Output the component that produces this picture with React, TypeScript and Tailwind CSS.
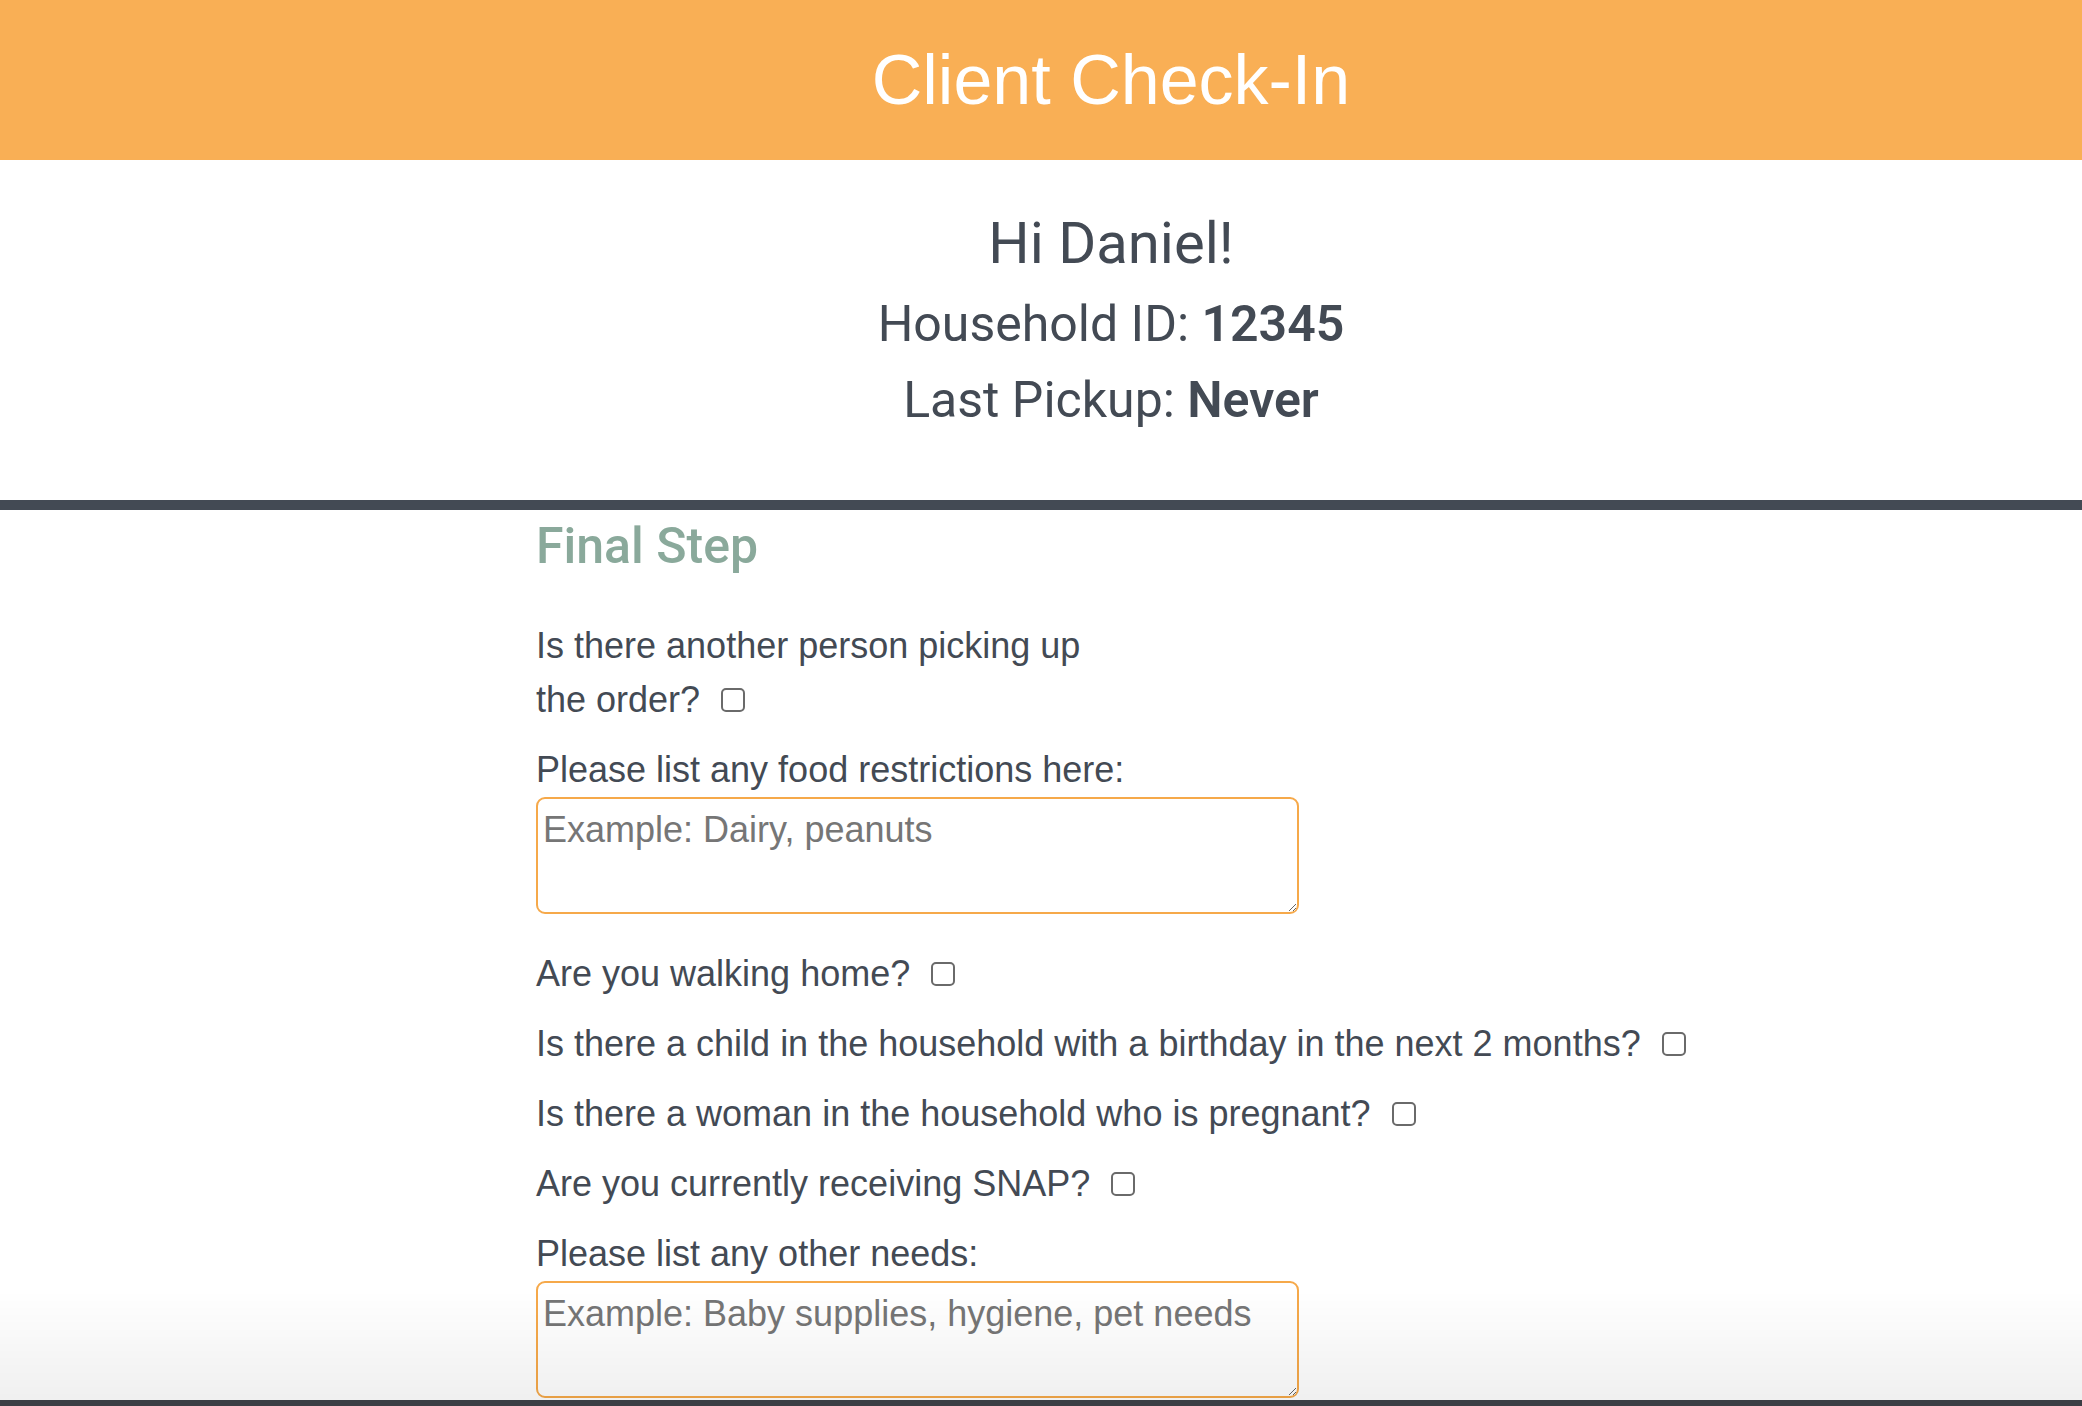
import type { ReactNode } from 'react'

const QUESTIONS = [
  'Are you walking home?',
  'Is there a child in the household with a birthday in the next 2 months?',
  'Is there a woman in the household who is pregnant?',
  'Are you currently receiving SNAP?',
]

function Box() {
  return (
    <input
      type="checkbox"
      className="appearance-none inline-block ml-[21px] w-[24px] h-[24px] border-2 border-[#6a6a6a] rounded-[5px] bg-white align-baseline"
    />
  )
}

function Question({ children, className = '' }: { children: ReactNode; className?: string }) {
  return (
    <label className={`block text-[36px] leading-[54px] ${className}`}>
      {children}
      <Box />
    </label>
  )
}

function Notes({ placeholder }: { placeholder: string }) {
  return (
    <textarea
      placeholder={placeholder}
      className="block w-[763px] h-[117px] border-2 border-[#f6a94a] rounded-[9px] px-[5px] py-[4px] text-[36px] leading-[54px] text-[#434a54] placeholder:text-[#767676] outline-none bg-transparent"
    />
  )
}

export default function App() {
  return (
    <div className="min-h-screen bg-white text-[#434a54]" style={{ fontFamily: '"Liberation Sans", Arial, sans-serif' }}>
      {/* Header */}
      <header className="h-[160px] bg-[#f9af55] flex items-center justify-center pl-[140px]">
        <h1 className="text-white text-[70px] leading-none">Client Check-In</h1>
      </header>

      {/* Greeting */}
      <section
        className="pt-[48px] pb-[62px] pl-[140px] text-center border-b-[10px] border-[#434a54]"
        style={{ fontFamily: 'Roboto, "Liberation Sans", sans-serif' }}
      >
        <h2 className="text-[58px] leading-[70px]">Hi Daniel!</h2>
        <p className="mt-[9px] text-[50px] leading-[75px]">
          Household ID: <span className="font-semibold">12345</span>
        </p>
        <p className="text-[50px] leading-[76px]">
          Last Pickup: <span className="font-semibold">Never</span>
        </p>
      </section>

      {/* Form */}
      <form className="pl-[536px] pb-[40px]">
        <h3
          className="mt-[5px] text-[50px] leading-[62px] font-medium text-[#8aa99b]"
          style={{ fontFamily: 'Roboto, "Liberation Sans", sans-serif' }}
        >
          Final Step
        </h3>

        <Question className="mt-[42px] max-w-[580px]">Is there another person picking up the order?</Question>

        <p className="mt-[16px] text-[36px] leading-[54px]">Please list any food restrictions here:</p>
        <Notes placeholder="Example: Dairy, peanuts" />

        <div className="mt-[33px] flex flex-col gap-[16px]">
          {QUESTIONS.map(q => (
            <Question key={q}>{q}</Question>
          ))}
          <p className="text-[36px] leading-[54px]">Please list any other needs:</p>
        </div>
        <Notes placeholder="Example: Baby supplies, hygiene, pet needs" />
      </form>

      {/* bottom fade + bar */}
      <div className="fixed left-0 right-0 bottom-[6px] h-[110px] pointer-events-none bg-gradient-to-b from-transparent to-[#000000]/[0.06]" />
      <div className="fixed left-0 right-0 bottom-0 h-[6px] bg-[#3b3e44]" />
    </div>
  )
}
